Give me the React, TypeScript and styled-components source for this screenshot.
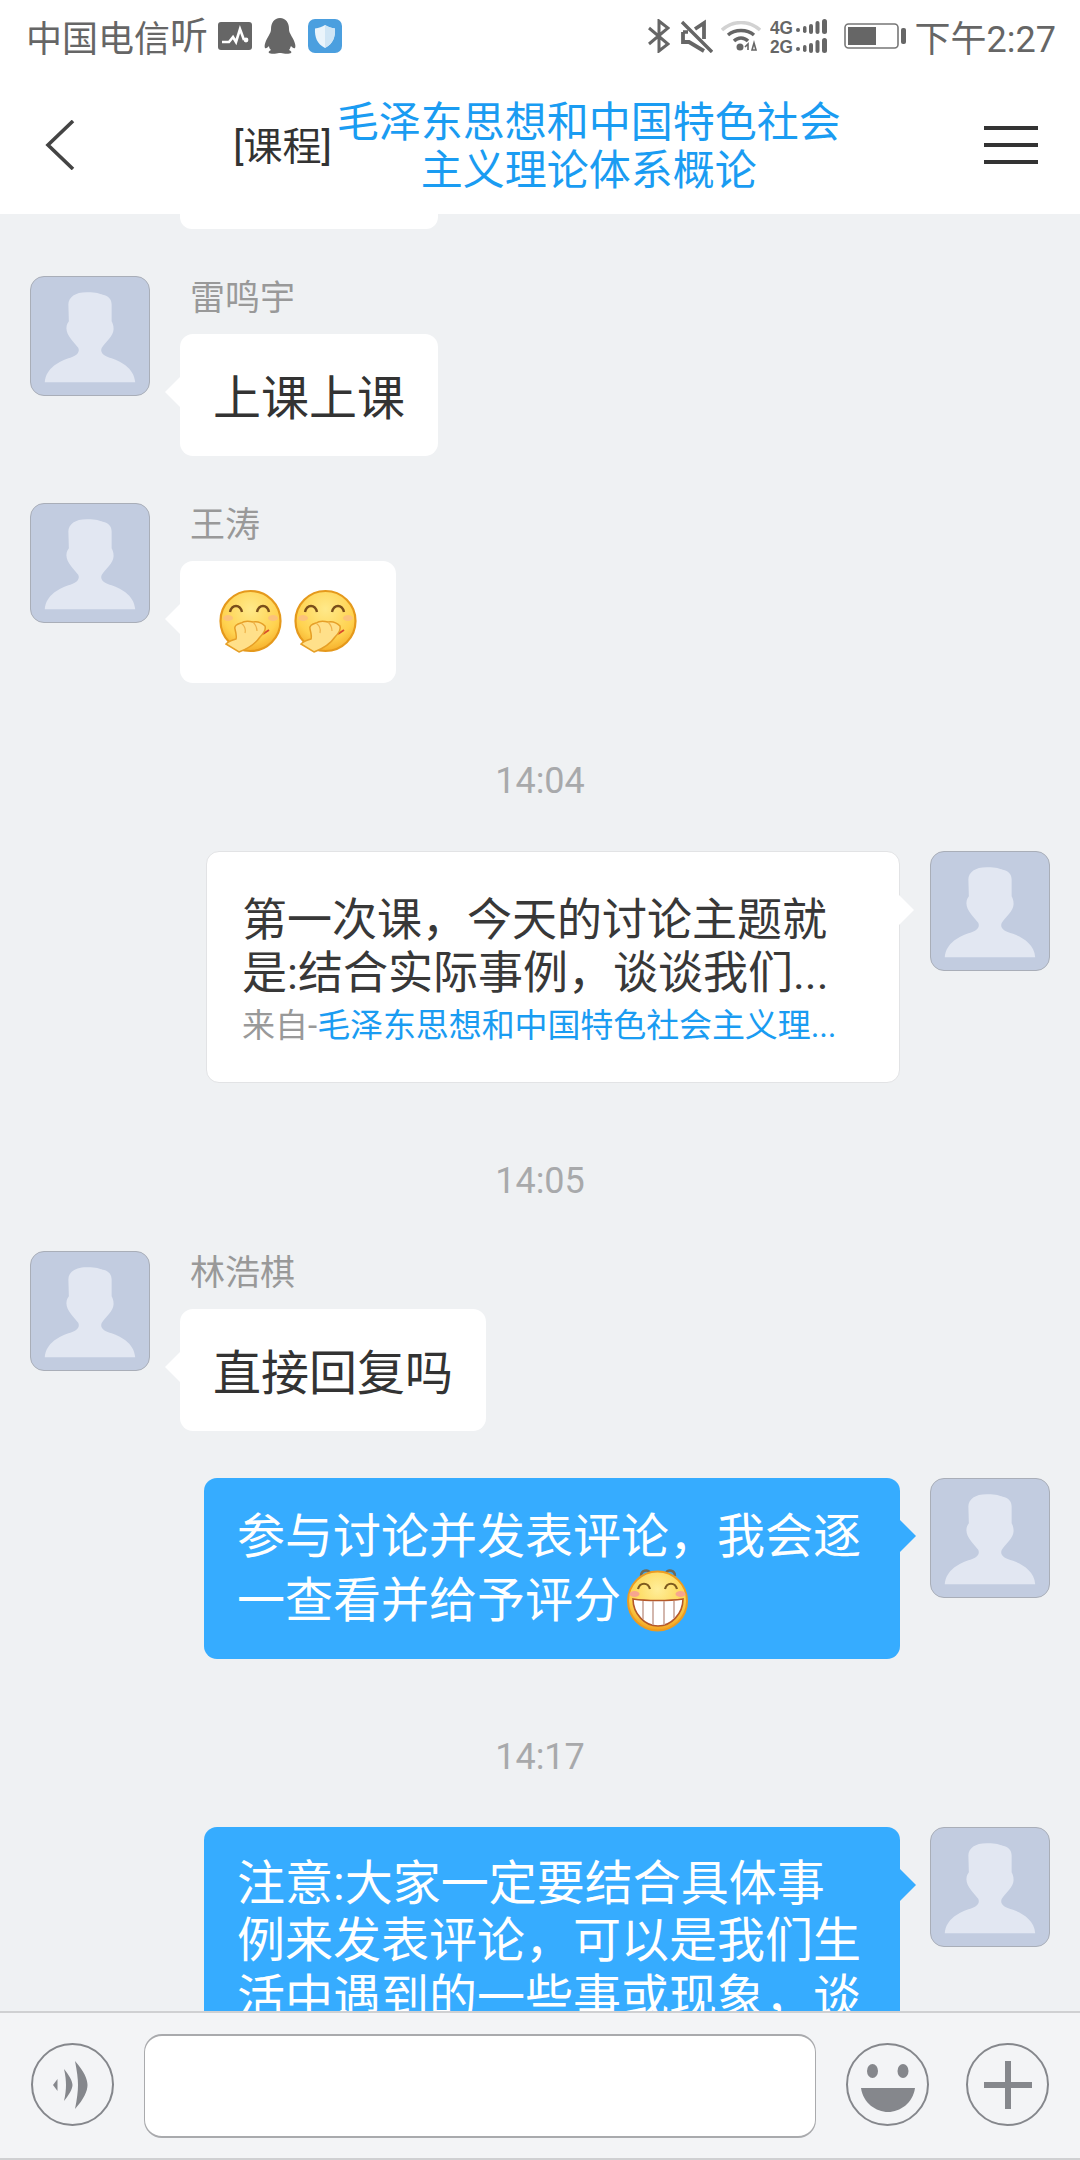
import React from "react";
import styled, { createGlobalStyle } from "styled-components";

const Global = createGlobalStyle`
  html, body { margin: 0; padding: 0; background: #fff; }
  body { font-family: Roboto, "Noto Sans CJK SC", sans-serif; }
`;

const Page = styled.div`
  width: 1080px;
  height: 2160px;
  display: flex;
  flex-direction: column;
  overflow: hidden;
  background: #fff;
`;

const StatusBar = styled.div`
  height: 72px;
  flex: none;
  display: flex;
  align-items: center;
  justify-content: space-between;
  padding: 0 24px 0 26px;
  color: #666;
  font-size: 36px;
`;

const StatusGroup = styled.div`
  display: flex;
  align-items: center;
`;

const StatusIcon = styled.svg<{ $ml: number }>`
  display: block;
  flex: none;
  margin-left: ${(p) => p.$ml}px;
`;

const ListenMark = styled.span`
  font-size: 38px;
  line-height: 40px;
`;

const Clock = styled.span`
  margin-left: 9px;
`;

const Header = styled.header`
  height: 142px;
  flex: none;
  display: flex;
  align-items: center;
  justify-content: space-between;
  padding: 0 42px 0 45px;
  background: #fff;
`;

const BackButton = styled.div`
  width: 46px;
  height: 50px;
  margin-top: 4px;
`;

const BackIcon = styled.svg`
  display: block;
`;

const TitleGroup = styled.div`
  display: flex;
  align-items: center;
  gap: 4px;
  margin-top: 8px;
`;

const CourseTag = styled.span`
  margin-top: -8px;
  font-size: 39px;
  color: #333;
`;

const CourseTitle = styled.h1`
  width: 506px;
  margin: 0;
  font-size: 42px;
  font-weight: 400;
  line-height: 48px;
  text-align: center;
  color: #1a9cf2;
`;

const MenuButton = styled.div`
  width: 54px;
  margin-top: 4px;
  display: flex;
  flex-direction: column;
  gap: 13px;
`;

const MenuBar = styled.span`
  display: block;
  height: 4px;
  background: #333;
`;

const Chat = styled.main`
  flex: 1;
  min-height: 0;
  overflow: hidden;
  display: flex;
  flex-direction: column;
  gap: 47px;
  background: #eff1f3;
`;

const ScrolledStub = styled.div`
  flex: none;
  width: 258px;
  height: 15px;
  margin-left: 180px;
  background: #fff;
  border-radius: 0 0 12px 12px;
`;

const Row = styled.div<{ $mine?: boolean }>`
  flex: none;
  display: flex;
  align-items: flex-start;
  justify-content: ${(p) => (p.$mine ? "flex-end" : "flex-start")};
  gap: 30px;
  padding: 0 30px;
`;

const AvatarBox = styled.svg`
  display: block;
  flex: none;
  width: 120px;
  height: 120px;
  box-sizing: border-box;
  background: #c2cce0;
  border: 1px solid #a9aeb8;
  border-radius: 14px;
`;

const Column = styled.div`
  display: flex;
  flex-direction: column;
  align-items: flex-start;
`;

const Name = styled.div`
  height: 46px;
  margin-bottom: 12px;
  padding-left: 10px;
  font-size: 35px;
  line-height: 46px;
  color: #999;
`;

const Bubble = styled.div<{ $emoji?: boolean }>`
  position: relative;
  box-sizing: border-box;
  height: 122px;
  padding: ${(p) => (p.$emoji ? "0 39px" : "0 33px 2px")};
  display: flex;
  align-items: center;
  gap: 12px;
  background: #fff;
  border-radius: 13px;
  font-size: 48px;
  color: #333;
  &::before {
    content: "";
    position: absolute;
    left: -15px;
    top: 43px;
    border-style: solid;
    border-width: 15px 15px 15px 0;
    border-color: transparent #fff transparent transparent;
  }
`;

const ShareCard = styled.div`
  position: relative;
  box-sizing: border-box;
  width: 694px;
  padding: 42px 30px 36px 35px;
  background: #fff;
  border: 1px solid #e2e3e5;
  border-radius: 13px;
  &::after {
    content: "";
    position: absolute;
    right: -15px;
    top: 43px;
    border-style: solid;
    border-width: 15px 0 15px 15px;
    border-color: transparent transparent transparent #fff;
  }
`;

const ShareLine = styled.div`
  font-size: 45px;
  line-height: 53px;
  color: #383838;
  white-space: nowrap;
`;

const ShareSource = styled.div`
  margin-top: 6px;
  font-size: 33px;
  line-height: 40px;
  color: #999;
  white-space: nowrap;
`;

const SourceLink = styled.span`
  color: #1a9cf2;
  letter-spacing: -0.1px;
`;

const BlueBubble = styled.div`
  position: relative;
  box-sizing: border-box;
  width: 696px;
  padding: 28px 30px 27px 33px;
  background: #36acff;
  border-radius: 13px;
  font-size: 48px;
  line-height: 57px;
  color: #fff;
  &::after {
    content: "";
    position: absolute;
    right: -16px;
    top: 42px;
    border-style: solid;
    border-width: 16px 0 16px 16px;
    border-color: transparent transparent transparent #36acff;
  }
`;

const EmojiBlueBubble = styled(BlueBubble)`
  height: 181px;
  padding-top: 27px;
  padding-bottom: 0;
  line-height: 63px;
`;

const InlineEmoji = styled.svg`
  display: inline-block;
  width: 63px;
  height: 64px;
  margin: 0 0 8px 5px;
  vertical-align: middle;
`;

const BubbleEmoji = styled.svg`
  display: block;
  width: 63px;
  height: 66px;
`;

const TimeStamp = styled.div`
  flex: none;
  margin-top: 28px;
  height: 46px;
  font-size: 36px;
  line-height: 46px;
  text-align: center;
  color: #a8a9ab;
`;

const InputBar = styled.footer`
  flex: none;
  height: 149px;
  box-sizing: border-box;
  display: flex;
  align-items: center;
  padding: 0 31px;
  background: #f3f4f6;
  border-top: 2px solid #cfd0d2;
  border-bottom: 2px solid #cfd0d2;
`;

const RoundButton = styled.svg<{ $ml: number }>`
  display: block;
  flex: none;
  width: 83px;
  height: 83px;
  margin-left: ${(p) => p.$ml}px;
  margin-bottom: 3px;
`;

const TextField = styled.div`
  flex: none;
  box-sizing: border-box;
  width: 672px;
  height: 104px;
  margin-left: 30px;
  background: #fff;
  border: 1px solid #a9aaad;
  border-top-width: 2px;
  border-bottom-width: 2px;
  border-radius: 18px;
`;

const Avatar = () => (
  <AvatarBox viewBox="0 0 120 120">
    <path
      fill="#e2e7f2"
      d="M14 107C15 92 30 85 40 82C47 80 50 76 48 72C44 66 36 60 36 52C36 48 38 46 38.5 45L38 28C38 20 46 15 58 15.5C66 15.5 70 17 73 18C79 19 82 23 82 28L82 45C83 47 84 49 84 53C84 60 76 66 72 72C70 76 73 80 80 82C90 85 105 92 106 107Z"
    />
  </AvatarBox>
);

const CoverMouthEmoji = ({ id }: { id: string }) => (
  <BubbleEmoji viewBox="0 0 63 66">
    <defs>
      <radialGradient id={id} cx="50%" cy="30%" r="70%">
        <stop offset="0%" stopColor="#ffe98a" />
        <stop offset="70%" stopColor="#ffd24f" />
        <stop offset="100%" stopColor="#f6b02c" />
      </radialGradient>
    </defs>
    <circle cx="31.5" cy="32" r="30" fill={`url(#${id})`} stroke="#e5991c" strokeWidth="2.2" />
    <ellipse cx="9" cy="29" rx="5" ry="3" fill="#fcc27a" />
    <ellipse cx="54" cy="29" rx="5" ry="3" fill="#fcc27a" />
    <path d="M11 23C13 15 21 15 23 23M38 23C40 15 48 15 50 23" fill="none" stroke="#7a4e1a" strokeWidth="2.4" />
    <path d="M44 45L50 41" stroke="#d8492c" strokeWidth="1.8" />
    <path
      d="M7 55L20 63C28 60 37 54 41 48C45 44 47 40 46 37C42 33 38 32 34 33C30 32 25 32 22 34C18 35 15 37 16 40C17 44 18 48 17 50C13 51 9 53 7 55Z"
      fill="#ffe08a"
      stroke="#e69f27"
      strokeWidth="1.5"
    />
    <path d="M22 34C26 37 27 40 26 44M34 33C37 36 38 38 38 42" fill="none" stroke="#eeb24a" strokeWidth="1.2" />
  </BubbleEmoji>
);

const GrinEmoji = () => (
  <InlineEmoji viewBox="0 0 63 64">
    <defs>
      <radialGradient id="grin" cx="50%" cy="30%" r="70%">
        <stop offset="0%" stopColor="#ffee9a" />
        <stop offset="70%" stopColor="#fdd44f" />
        <stop offset="100%" stopColor="#f2a01e" />
      </radialGradient>
    </defs>
    <path d="M15 8C15 2 22 1 24 5M40 5C42 1 49 2 49 8" fill="none" stroke="#6f6a58" strokeWidth="2.4" />
    <circle cx="31.5" cy="33" r="29.5" fill="url(#grin)" stroke="#ec9c22" strokeWidth="2" />
    <ellipse cx="8.5" cy="26" rx="5" ry="3" fill="#f8a58e" />
    <ellipse cx="54.5" cy="26" rx="5" ry="3" fill="#f8a58e" />
    <path d="M12 21C14 14 22 14 24 21M39 21C41 14 49 14 51 21" fill="none" stroke="#7e5a1e" strokeWidth="2.2" />
    <path d="M7 31C20 33 43 33 57 31C57 46 45 58 32 58C19 58 7 46 7 31Z" fill="#fff" stroke="#b4582a" strokeWidth="1.6" />
    <path d="M17 33V51M27 33V57M38 33V57M48 33V50" stroke="#c9a69a" strokeWidth="1.6" />
  </InlineEmoji>
);

const ActivityIcon = () => (
  <StatusIcon $ml={10} width="34" height="28" viewBox="0 0 34 28">
    <rect width="34" height="28" rx="3" fill="#666" />
    <path d="M4 20H11L15 15L18 20L22 7L26 18" fill="none" stroke="#fff" strokeWidth="2.6" />
    <circle cx="28" cy="18" r="2.4" fill="#fff" />
  </StatusIcon>
);

const QQIcon = () => (
  <StatusIcon $ml={12} width="32" height="36" viewBox="0 0 32 36">
    <path
      fill="#666"
      d="M16 0C22 0 25 5 25 11C25 14 26 15 28 19C31 24 32 28 31 30C30 31 28 29 27 28C26 30 26 31 25 32C27 33 28 34 27 35C26 36 20 36 17 35H15C12 36 6 36 5 35C4 34 5 33 7 32C6 31 5 30 5 28C4 29 2 31 1 30C0 28 1 24 4 19C6 15 7 14 7 11C7 5 10 0 16 0Z"
    />
  </StatusIcon>
);

const ShieldIcon = () => (
  <StatusIcon $ml={12} width="34" height="34" viewBox="0 0 34 34">
    <rect width="34" height="34" rx="7" fill="#4b9fdf" />
    <path d="M17 6C20 8 23 9 27 9.5C27.5 18 25 25 17 29C9 25 6.5 18 7 9.5C11 9 14 8 17 6Z" fill="#eaf4fb" />
    <path d="M17 6C20 8 23 9 27 9.5C27.5 18 25 25 17 29Z" fill="#cfe5f5" />
  </StatusIcon>
);

const BluetoothIcon = () => (
  <StatusIcon $ml={0} width="22" height="34" viewBox="0 0 22 34">
    <path d="M1 9L20 25L11 32V2L20 9L1 25" fill="none" stroke="#666" strokeWidth="3" />
  </StatusIcon>
);

const MuteIcon = () => (
  <StatusIcon $ml={10} width="33" height="34" viewBox="0 0 33 34">
    <path d="M3 13V23H9L24 32M24 20V4L15 10" fill="none" stroke="#666" strokeWidth="3.8" />
    <path d="M3 13H8M2 3L32 33" fill="none" stroke="#666" strokeWidth="3.4" />
  </StatusIcon>
);

const WifiIcon = () => (
  <StatusIcon $ml={8} width="40" height="30" viewBox="0 0 40 30">
    <path d="M1 9C12 -1 28 -1 39 9" fill="none" stroke="#d2d2d2" strokeWidth="3.4" />
    <path d="M7 14C14 8 26 8 33 14M13 20C17 16 23 16 27 20" fill="none" stroke="#666" strokeWidth="3.4" />
    <circle cx="19" cy="26" r="3.5" fill="#666" />
    <path d="M27 29V23L24 26M33 22L31 29H35Z" fill="none" stroke="#666" strokeWidth="1.6" />
  </StatusIcon>
);

const SignalRow = ({ y }: { y: number }) => (
  <>
    <circle cx="28" cy={y + 11} r="2" fill="#666" />
    <rect x="33" y={y + 7} width="3.5" height="7" rx="1.7" fill="#666" />
    <rect x="39" y={y + 5} width="4" height="10" rx="2" fill="#666" />
    <rect x="45.5" y={y + 2} width="4" height="13" rx="2" fill="#666" />
    <rect x="52" y={y} width="5" height="15" rx="2.5" fill="#666" />
  </>
);

const CellIcon = () => (
  <StatusIcon $ml={9} width="58" height="44" viewBox="0 -4 58 44">
    <text x="0" y="15.5" fontFamily="Liberation Sans" fontWeight="700" fontSize="19" textLength="23" lengthAdjust="spacingAndGlyphs" fill="#666">4G</text>
    <text x="0" y="35" fontFamily="Liberation Sans" fontWeight="700" fontSize="19" textLength="23" lengthAdjust="spacingAndGlyphs" fill="#666">2G</text>
    <SignalRow y={1} />
    <SignalRow y={20} />
  </StatusIcon>
);

const BatteryIcon = () => (
  <StatusIcon $ml={16} width="62" height="26" viewBox="0 0 62 26">
    <rect x="1" y="1" width="53" height="24" rx="3.5" fill="none" stroke="#777" strokeWidth="1.6" />
    <rect x="4" y="4" width="28" height="18" fill="#666" />
    <rect x="57" y="5" width="5" height="16" rx="2" fill="#666" />
  </StatusIcon>
);

export default function App() {
  return (
    <Page>
      <Global />
      <StatusBar>
        <StatusGroup>
          <span>中国电信</span>
          <ListenMark>听</ListenMark>
          <ActivityIcon />
          <QQIcon />
          <ShieldIcon />
        </StatusGroup>
        <StatusGroup>
          <BluetoothIcon />
          <MuteIcon />
          <WifiIcon />
          <CellIcon />
          <BatteryIcon />
          <Clock>下午2:27</Clock>
        </StatusGroup>
      </StatusBar>

      <Header>
        <BackButton>
          <BackIcon width="30" height="50" viewBox="0 0 30 50">
            <path d="M28 1L3 25L28 49" fill="none" stroke="#444" strokeWidth="3.6" />
          </BackIcon>
        </BackButton>
        <TitleGroup>
          <CourseTag>[课程]</CourseTag>
          <CourseTitle>毛泽东思想和中国特色社会主义理论体系概论</CourseTitle>
        </TitleGroup>
        <MenuButton>
          <MenuBar />
          <MenuBar />
          <MenuBar />
        </MenuButton>
      </Header>

      <Chat>
        <ScrolledStub />
        <Row>
          <Avatar />
          <Column>
            <Name>雷鸣宇</Name>
            <Bubble>上课上课</Bubble>
          </Column>
        </Row>
        <Row>
          <Avatar />
          <Column>
            <Name>王涛</Name>
            <Bubble $emoji>
              <CoverMouthEmoji id="cover-a" />
              <CoverMouthEmoji id="cover-b" />
            </Bubble>
          </Column>
        </Row>
        <TimeStamp>14:04</TimeStamp>
        <Row $mine>
          <ShareCard>
            <ShareLine>第一次课，今天的讨论主题就</ShareLine>
            <ShareLine>是:结合实际事例，谈谈我们...</ShareLine>
            <ShareSource>
              来自-<SourceLink>毛泽东思想和中国特色社会主义理...</SourceLink>
            </ShareSource>
          </ShareCard>
          <Avatar />
        </Row>
        <TimeStamp>14:05</TimeStamp>
        <Row>
          <Avatar />
          <Column>
            <Name>林浩棋</Name>
            <Bubble>直接回复吗</Bubble>
          </Column>
        </Row>
        <Row $mine>
          <EmojiBlueBubble>
            参与讨论并发表评论，我会逐一查看并给予评分
            <GrinEmoji />
          </EmojiBlueBubble>
          <Avatar />
        </Row>
        <TimeStamp>14:17</TimeStamp>
        <Row $mine>
          <BlueBubble>
            注意:大家一定要结合具体事例来发表评论，可以是我们生活中遇到的一些事或现象，谈
          </BlueBubble>
          <Avatar />
        </Row>
      </Chat>

      <InputBar>
        <RoundButton $ml={0} viewBox="0 0 83 83">
          <circle cx="41.5" cy="41.5" r="40.5" fill="none" stroke="#85878c" strokeWidth="2" />
          <path d="M22 42L26.5 36V48Z" fill="#85878c" />
          <path d="M33 26C38 32 41.5 38 41.5 42C41.5 46 38 52 33 58C34.500 52 35 46 35 42C35 38 34.500 32 33 26Z" fill="#85878c" />
          <path d="M44 18C53 28 56.5 36 56.5 42C56.5 48 53 56 44 66C46 56 47 48 47 42C47 36 46 28 44 18Z" fill="#85878c" />
        </RoundButton>
        <TextField />
        <RoundButton $ml={30} viewBox="0 0 83 83">
          <circle cx="41.5" cy="41.5" r="40.5" fill="none" stroke="#85878c" strokeWidth="2" />
          <ellipse cx="26.5" cy="28" rx="5.5" ry="7" fill="#85878c" />
          <ellipse cx="57" cy="28" rx="5.5" ry="7" fill="#85878c" />
          <path d="M15 45H69C67 60 54 69 42 69C30 69 17 60 15 45Z" fill="#85878c" />
        </RoundButton>
        <RoundButton $ml={37} viewBox="0 0 83 83">
          <circle cx="41.5" cy="41.5" r="40.5" fill="none" stroke="#85878c" strokeWidth="2" />
          <path d="M39 18H45V39H66V45H45V66H39V45H18V39H39Z" fill="#85878c" />
        </RoundButton>
      </InputBar>
    </Page>
  );
}
